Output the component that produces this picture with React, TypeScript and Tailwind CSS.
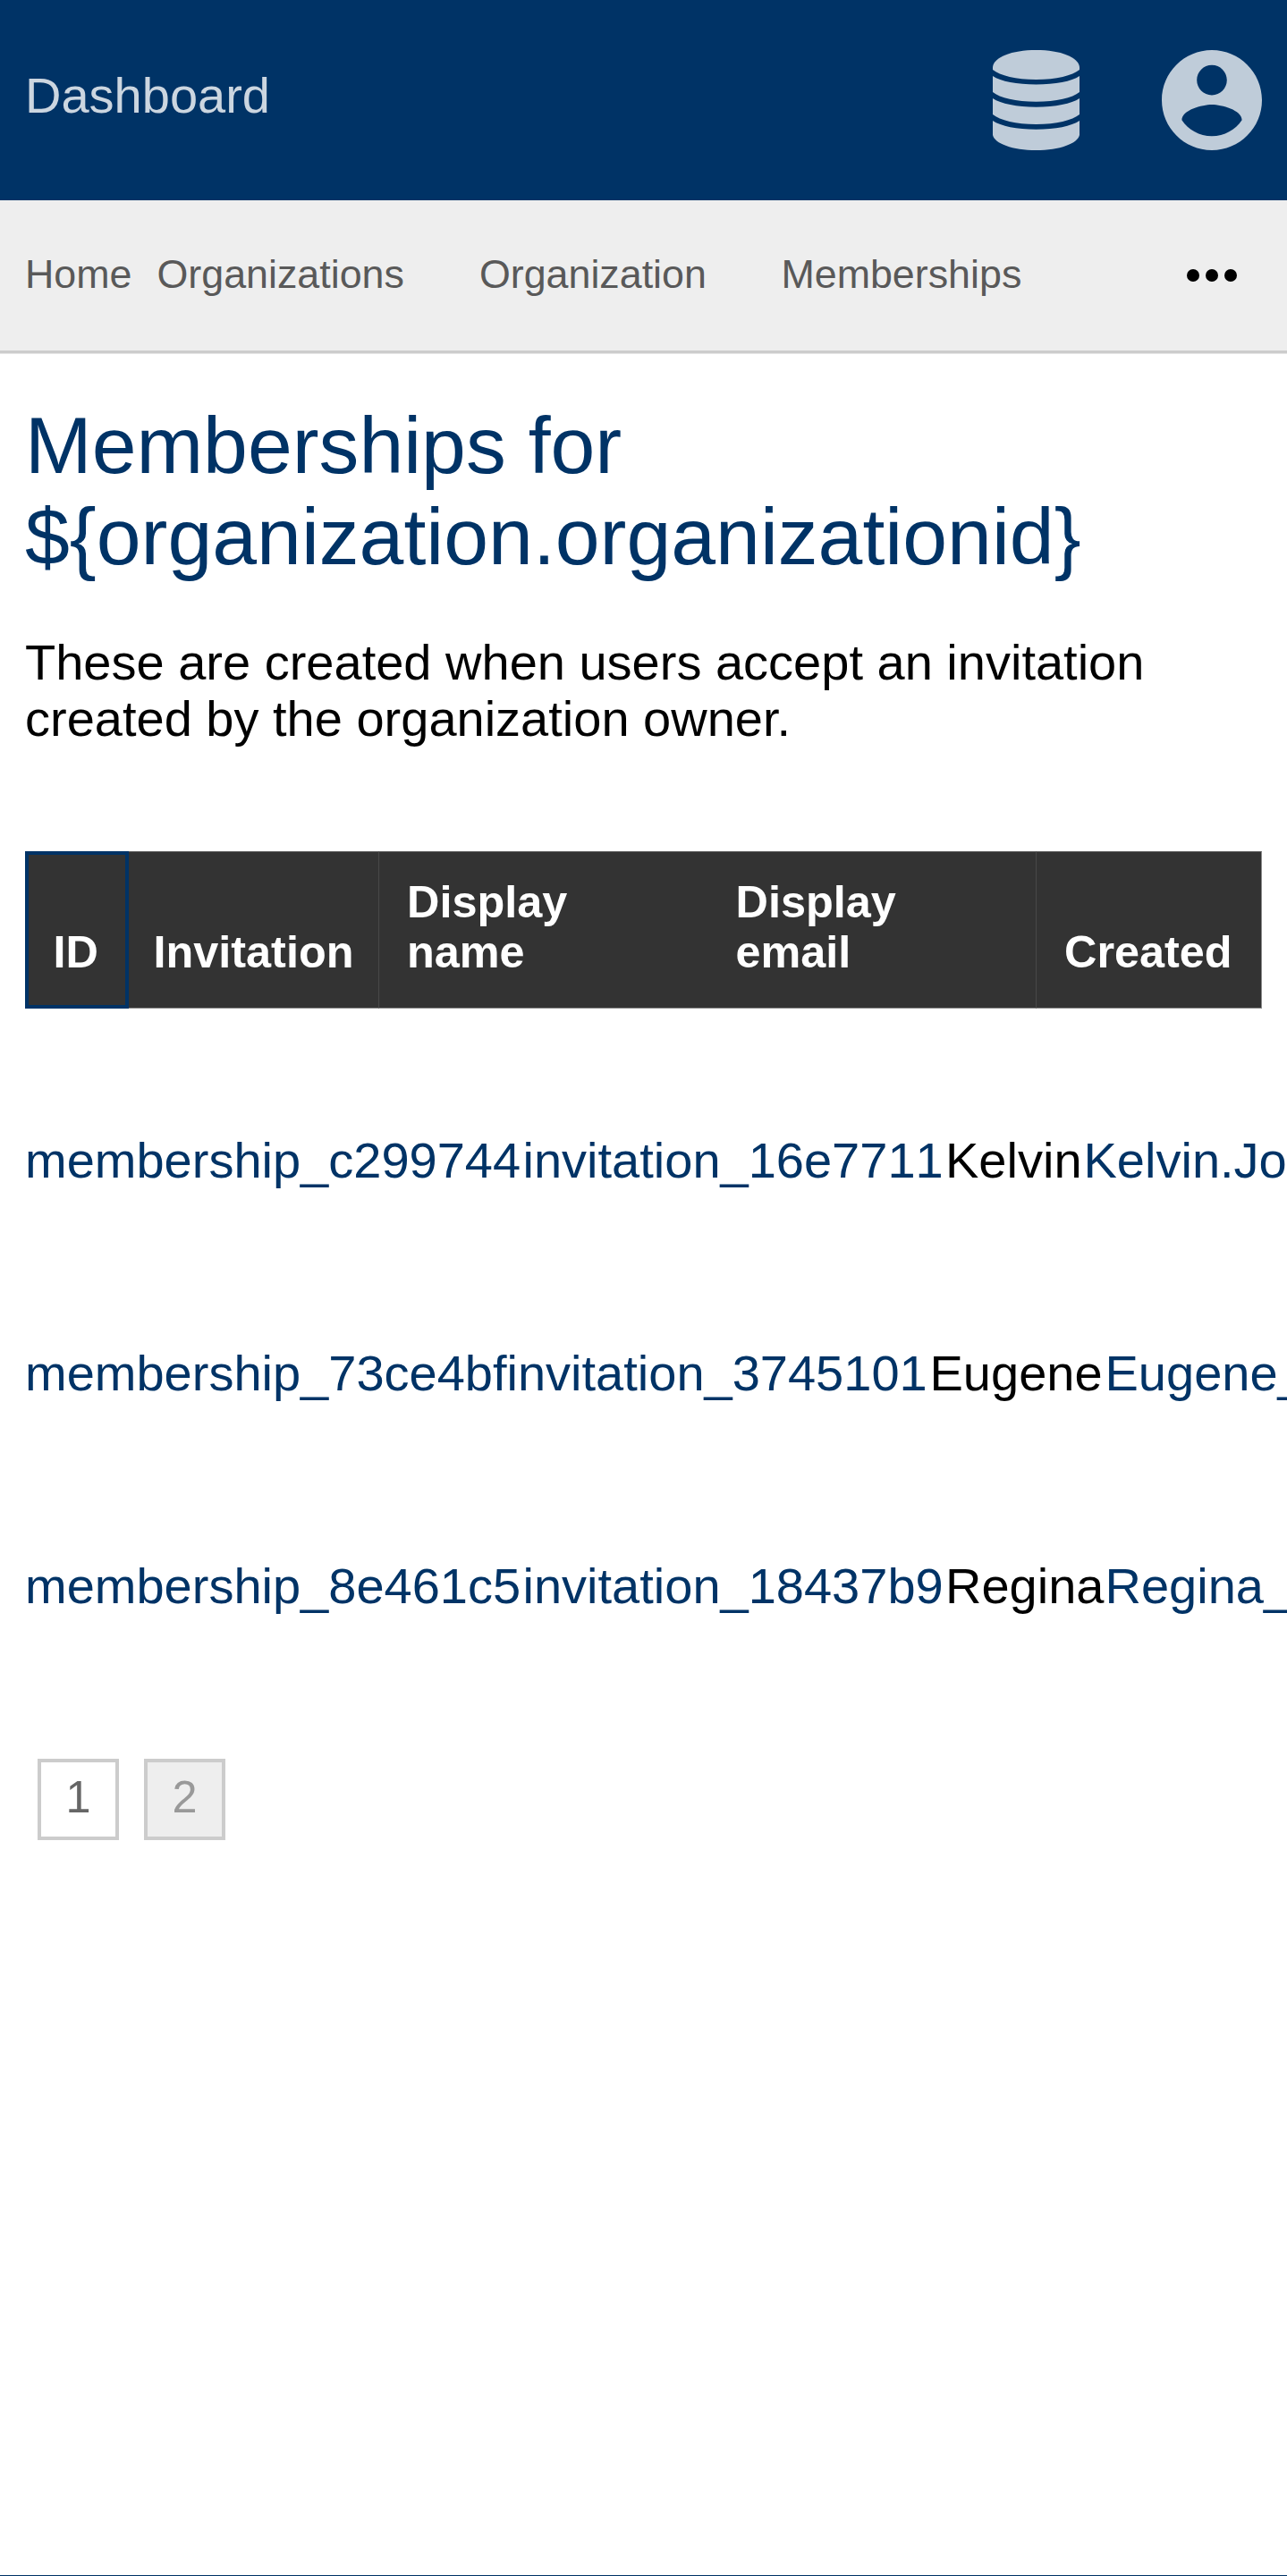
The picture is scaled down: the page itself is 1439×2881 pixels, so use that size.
const rows = [
  { id: 'membership_c299744', invitation: 'invitation_16e7711', name: 'Kelvin', email: 'Kelvin.Jo', cols: 'grid-cols-[556.5px_472.5px_154.5px_auto]' },
  { id: 'membership_73ce4bf', invitation: 'invitation_3745101', name: 'Eugene', email: 'Eugene_', cols: 'grid-cols-[538.5px_473px_196px_auto]' },
  { id: 'membership_8e461c5', invitation: 'invitation_18437b9', name: 'Regina', email: 'Regina_', cols: 'grid-cols-[556.5px_472.5px_178.5px_auto]' },
];

function DatabaseIcon() {
  return (
    <svg className="h-28 w-[97px]" viewBox="0 0 97 112" fill="#bfccd9" aria-hidden="true">
      <path d="M0 19C1 8 21 0 48.500 0S96 8 97 19V22C89 28.500 71 33 48.500 33S8 28.500 0 22Z" />
      <path d="M0 29C9 35 27 38.500 48.500 38.500S88 35 97 29V47C89 53.500 71 57.800 48.500 57.800S8 53.500 0 47Z" />
      <path d="M0 54C9 60 27 63.700 48.500 63.700S88 60 97 54V72C89 78.500 71 83 48.500 83S8 78.500 0 72Z" />
      <path d="M0 79C9 85 27 88.800 48.500 88.800S88 85 97 79V95C95 104.500 75 112 48.500 112S2 104.500 0 95Z" />
    </svg>
  );
}

function AccountIcon() {
  return (
    <svg className="size-28" viewBox="2 2 20 20" fill="#bfccd9" aria-hidden="true">
      <path d="M12 2C6.480 2 2 6.480 2 12s4.480 10 10 10 10-4.480 10-10S17.520 2 12 2zm0 3c1.660 0 3 1.340 3 3s-1.340 3-3 3-3-1.340-3-3 1.340-3 3-3zm0 14.200c-2.500 0-4.710-1.280-6-3.220.030-1.990 4-3.080 6-3.080 1.990 0 5.970 1.090 6 3.080-1.290 1.940-3.500 3.220-6 3.220z" />
    </svg>
  );
}

function MoreIcon() {
  return (
    <svg className="h-14 w-14" viewBox="0 0 16 16" fill="#000" aria-hidden="true">
      <circle cx="2" cy="8" r="2" />
      <circle cx="8" cy="8" r="2" />
      <circle cx="14" cy="8" r="2" />
    </svg>
  );
}

export default function App() {
  return (
    <div className="flex h-[2881px] w-full flex-col overflow-hidden bg-white font-['Liberation_Sans',Arial,sans-serif] text-[56px] leading-[63px] text-black">
      <header className="flex h-56 shrink-0 items-start justify-between bg-[#003366] pl-7 pr-[28.5px]">
        <a className="mt-[75px] text-[#ccd6e0]">Dashboard</a>
        <div className="mt-14 flex gap-[92px]">
          <DatabaseIcon />
          <AccountIcon />
        </div>
      </header>

      <nav className="flex h-[171px] shrink-0 items-start border-b-[3px] border-[#cccccc] bg-[#eeeeee] pl-7 text-[44.8px] leading-[50px] text-[#595959] shadow-[0_1px_0_#e6e6e6]">
        <a className="mt-[57px]">Home</a>
        <a className="ml-7 mt-[57px]">Organizations</a>
        <a className="ml-[84px] mt-[57px]">Organization</a>
        <a className="ml-[83.5px] mt-[57px]">Memberships</a>
        <div className="ml-auto mr-[56.5px] mt-14">
          <MoreIcon />
        </div>
      </nav>

      <main className="px-7 pt-[52px]">
        <h1 className="text-[89.6px] leading-[102px] text-[#003366]">
          Memberships for
          <br />
          {'${organization.organizationid}'}
        </h1>
        <p className="mt-[58px]">
          These are created when users accept an invitation
          <br />
          created by the organization owner.
        </p>

        <div className="mt-[117px] grid h-44 w-[1383px] grid-cols-[116px_280px_368px_367px_252px] items-stretch bg-[#333333] text-[50.4px] font-bold leading-[56px] text-white">
          <div className="flex items-end border-4 border-[#003366] pb-[31px] pl-[27.5px]">ID</div>
          <div className="flex items-end border-r border-t border-b border-r-[#484848] border-t-[#5c5c5c] border-b-[#8c8c8c] pb-[34px] pl-[27.5px]">Invitation</div>
          <div className="flex items-end border-t border-b border-t-[#5c5c5c] border-b-[#8c8c8c] pb-[34px] pl-[31px]">
            Display
            <br />
            name
          </div>
          <div className="flex items-end border-r border-t border-b border-r-[#484848] border-t-[#5c5c5c] border-b-[#8c8c8c] pb-[34px] pl-[30.5px]">
            Display
            <br />
            email
          </div>
          <div className="flex items-end border-r border-t border-b border-r-[#8c8c8c] border-t-[#5c5c5c] border-b-[#8c8c8c] pb-[34px] pl-[31px]">Created</div>
        </div>

        <div className="mt-[50px]">
          {rows.map((row) => (
            <div key={row.id} className={`grid h-[238px] items-center whitespace-nowrap text-[#003366] [font-kerning:none] ${row.cols}`}>
              <a>{row.id}</a>
              <a>{row.invitation}</a>
              <span className="text-black">{row.name}</span>
              <a>{row.email}</a>
            </div>
          ))}
        </div>

        <div className="ml-3.5 mt-[75px] flex gap-7 text-center text-[50.4px] leading-[56px]">
          <a className="size-[91px] border-4 border-[#cccccc] pt-[11px] text-[#666666]">1</a>
          <a className="size-[91px] border-4 border-[#cccccc] bg-[#eeeeee] pt-[11px] text-[#999999]">2</a>
        </div>
      </main>

      <footer className="mt-auto h-px shrink-0 bg-[#003366]" />
    </div>
  );
}
